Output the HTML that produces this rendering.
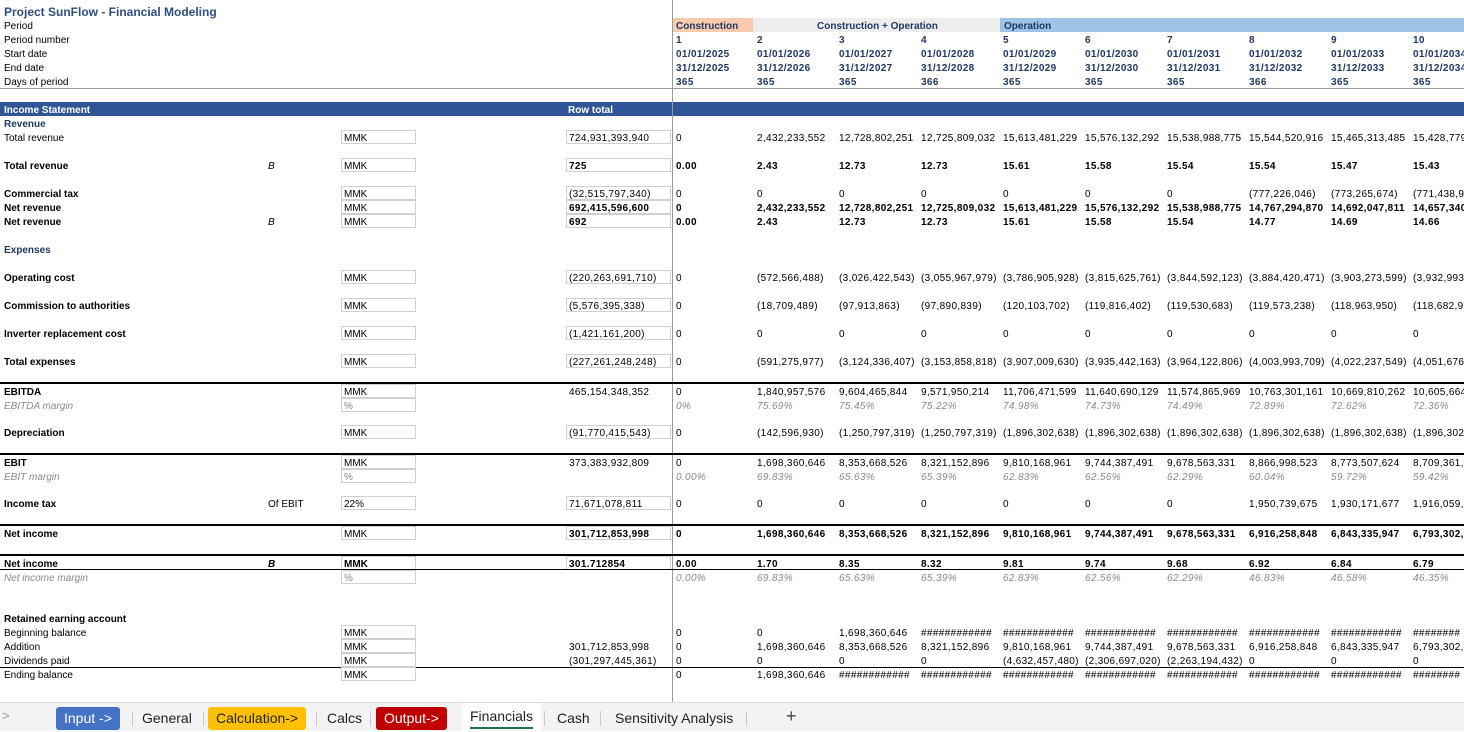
<!DOCTYPE html>
<html><head><meta charset="utf-8"><style>
*{margin:0;padding:0;box-sizing:border-box}
body{width:1464px;height:731px;overflow:hidden;background:#fff;font-family:"Liberation Sans",Arial,sans-serif;font-size:10px;color:#000;position:relative}
.r{position:absolute;left:0;width:1464px;height:14px;line-height:17px;white-space:nowrap}
.r span{position:absolute;top:0}
.a{left:4px}.b{left:268px}
.u{left:341px;width:75px;height:14px;border:1px solid #d0d0d0;padding-left:2px;line-height:15px}
.t{left:566px;width:105px;height:14px;border:1px solid #d0d0d0;padding-left:2px;line-height:15px;letter-spacing:0.35px}
.c0{left:676px}.c1{left:757px}.c2{left:839px}.c3{left:921px}.c4{left:1003px}.c5{left:1085px}.c6{left:1167px}.c7{left:1249px}.c8{left:1331px}.c9{left:1413px}
.r span[class^="c"]{letter-spacing:0.35px}
.bd{font-weight:bold}.bd span{font-weight:bold}
.it span{font-style:italic;color:#8a8a8a}
.it span.u{color:#8a8a8a;font-style:normal}
.nv span{color:#1f3864}
.hl{position:absolute;left:0;width:1464px;background:#000}
.vl{position:absolute;left:672px;top:0;width:1px;height:702px;background:#9a9a9a}
.tabs{position:absolute;left:0;top:702px;width:1464px;height:29px;background:#f3f3f3;border-top:1px solid #dcdcdc;font-size:14px}
.tab{position:absolute;top:4px;height:23px;line-height:23px;padding:0 8px;border-radius:3px;color:#222}
.sep{position:absolute;top:8px;width:1px;height:15px;background:#c8c8c8}
</style></head><body>
<div class="vl"></div>
<div style="position:absolute;left:673px;top:18px;width:80px;height:14px;background:#f8cbad"></div>
<div style="position:absolute;left:753px;top:18px;width:247px;height:14px;background:#ededed"></div>
<div style="position:absolute;left:1000px;top:18px;width:464px;height:14px;background:#9dc3e6"></div>
<div class="r" style="top:4px"><span class="a" style="font-weight:bold;font-size:12px;color:#2f4d7e">Project SunFlow - Financial Modeling</span></div>
<div class="r bd" style="top:18px"><span class="a" style="font-weight:normal">Period</span><span class="c0" style="color:#1f3864;letter-spacing:0">Construction</span><span style="left:817px;color:#1f3864">Construction + Operation</span><span style="left:1004px;color:#1f3864">Operation</span></div>
<div class="r" style="top:32px"><span class="a">Period number</span></div>
<div class="r bd nv" style="top:32px"><span class="c0">1</span><span class="c1">2</span><span class="c2">3</span><span class="c3">4</span><span class="c4">5</span><span class="c5">6</span><span class="c6">7</span><span class="c7">8</span><span class="c8">9</span><span class="c9">10</span></div>
<div class="r" style="top:46px"><span class="a">Start date</span></div>
<div class="r bd nv" style="top:46px"><span class="c0">01/01/2025</span><span class="c1">01/01/2026</span><span class="c2">01/01/2027</span><span class="c3">01/01/2028</span><span class="c4">01/01/2029</span><span class="c5">01/01/2030</span><span class="c6">01/01/2031</span><span class="c7">01/01/2032</span><span class="c8">01/01/2033</span><span class="c9">01/01/2034</span></div>
<div class="r" style="top:60px"><span class="a">End date</span></div>
<div class="r bd nv" style="top:60px"><span class="c0">31/12/2025</span><span class="c1">31/12/2026</span><span class="c2">31/12/2027</span><span class="c3">31/12/2028</span><span class="c4">31/12/2029</span><span class="c5">31/12/2030</span><span class="c6">31/12/2031</span><span class="c7">31/12/2032</span><span class="c8">31/12/2033</span><span class="c9">31/12/2034</span></div>
<div class="r" style="top:74px"><span class="a">Days of period</span></div>
<div class="r bd nv" style="top:74px"><span class="c0">365</span><span class="c1">365</span><span class="c2">365</span><span class="c3">366</span><span class="c4">365</span><span class="c5">365</span><span class="c6">365</span><span class="c7">366</span><span class="c8">365</span><span class="c9">365</span></div>
<div class="hl" style="top:88px;height:1px;background:#9a9a9a"></div>
<div style="position:absolute;left:0;top:102px;width:672px;height:14px;background:#2f5597"></div>
<div style="position:absolute;left:673px;top:102px;width:791px;height:14px;background:#2f5597"></div>
<div class="r bd" style="top:102px;color:#fff"><span class="a">Income Statement</span><span style="left:568px">Row total</span></div>
<div class="r bd" style="top:116px;color:#1f3864"><span class="a">Revenue</span></div>
<div class="r" style="top:130px"><span class="a">Total revenue</span><span class="u">MMK</span><span class="t">724,931,393,940</span><span class="c0">0</span><span class="c1">2,432,233,552</span><span class="c2">12,728,802,251</span><span class="c3">12,725,809,032</span><span class="c4">15,613,481,229</span><span class="c5">15,576,132,292</span><span class="c6">15,538,988,775</span><span class="c7">15,544,520,916</span><span class="c8">15,465,313,485</span><span class="c9">15,428,779</span></div>
<div class="r bd" style="top:158px"><span class="a">Total revenue</span><span class="b" style="font-weight:normal;font-style:italic">B</span><span class="u" style="font-weight:normal">MMK</span><span class="t">725</span><span class="c0">0.00</span><span class="c1">2.43</span><span class="c2">12.73</span><span class="c3">12.73</span><span class="c4">15.61</span><span class="c5">15.58</span><span class="c6">15.54</span><span class="c7">15.54</span><span class="c8">15.47</span><span class="c9">15.43</span></div>
<div class="r" style="top:186px"><span class="a bd" style="font-weight:bold">Commercial tax</span><span class="u">MMK</span><span class="t">(32,515,797,340)</span><span class="c0">0</span><span class="c1">0</span><span class="c2">0</span><span class="c3">0</span><span class="c4">0</span><span class="c5">0</span><span class="c6">0</span><span class="c7">(777,226,046)</span><span class="c8">(773,265,674)</span><span class="c9">(771,438,9</span></div>
<div class="r bd" style="top:200px"><span class="a">Net revenue</span><span class="u" style="font-weight:normal">MMK</span><span class="t">692,415,596,600</span><span class="c0">0</span><span class="c1">2,432,233,552</span><span class="c2">12,728,802,251</span><span class="c3">12,725,809,032</span><span class="c4">15,613,481,229</span><span class="c5">15,576,132,292</span><span class="c6">15,538,988,775</span><span class="c7">14,767,294,870</span><span class="c8">14,692,047,811</span><span class="c9">14,657,340</span></div>
<div class="r bd" style="top:214px"><span class="a">Net revenue</span><span class="b" style="font-weight:normal;font-style:italic">B</span><span class="u" style="font-weight:normal">MMK</span><span class="t">692</span><span class="c0">0.00</span><span class="c1">2.43</span><span class="c2">12.73</span><span class="c3">12.73</span><span class="c4">15.61</span><span class="c5">15.58</span><span class="c6">15.54</span><span class="c7">14.77</span><span class="c8">14.69</span><span class="c9">14.66</span></div>
<div class="r bd" style="top:242px;color:#1f3864"><span class="a">Expenses</span></div>
<div class="r" style="top:270px"><span class="a" style="font-weight:bold">Operating cost</span><span class="u">MMK</span><span class="t">(220,263,691,710)</span><span class="c0">0</span><span class="c1">(572,566,488)</span><span class="c2">(3,026,422,543)</span><span class="c3">(3,055,967,979)</span><span class="c4">(3,786,905,928)</span><span class="c5">(3,815,625,761)</span><span class="c6">(3,844,592,123)</span><span class="c7">(3,884,420,471)</span><span class="c8">(3,903,273,599)</span><span class="c9">(3,932,993</span></div>
<div class="r" style="top:298px"><span class="a" style="font-weight:bold">Commission to authorities</span><span class="u">MMK</span><span class="t">(5,576,395,338)</span><span class="c0">0</span><span class="c1">(18,709,489)</span><span class="c2">(97,913,863)</span><span class="c3">(97,890,839)</span><span class="c4">(120,103,702)</span><span class="c5">(119,816,402)</span><span class="c6">(119,530,683)</span><span class="c7">(119,573,238)</span><span class="c8">(118,963,950)</span><span class="c9">(118,682,9</span></div>
<div class="r" style="top:326px"><span class="a" style="font-weight:bold">Inverter replacement cost</span><span class="u">MMK</span><span class="t">(1,421,161,200)</span><span class="c0">0</span><span class="c1">0</span><span class="c2">0</span><span class="c3">0</span><span class="c4">0</span><span class="c5">0</span><span class="c6">0</span><span class="c7">0</span><span class="c8">0</span><span class="c9">0</span></div>
<div class="r" style="top:354px"><span class="a" style="font-weight:bold">Total expenses</span><span class="u">MMK</span><span class="t">(227,261,248,248)</span><span class="c0">0</span><span class="c1">(591,275,977)</span><span class="c2">(3,124,336,407)</span><span class="c3">(3,153,858,818)</span><span class="c4">(3,907,009,630)</span><span class="c5">(3,935,442,163)</span><span class="c6">(3,964,122,806)</span><span class="c7">(4,003,993,709)</span><span class="c8">(4,022,237,549)</span><span class="c9">(4,051,676</span></div>
<div class="hl" style="top:382px;height:2px"></div>
<div class="r" style="top:384px"><span class="a" style="font-weight:bold">EBITDA</span><span class="u">MMK</span><span class="t" style="border-color:transparent">465,154,348,352</span><span class="c0">0</span><span class="c1">1,840,957,576</span><span class="c2">9,604,465,844</span><span class="c3">9,571,950,214</span><span class="c4">11,706,471,599</span><span class="c5">11,640,690,129</span><span class="c6">11,574,865,969</span><span class="c7">10,763,301,161</span><span class="c8">10,669,810,262</span><span class="c9">10,605,664</span></div>
<div class="r it" style="top:398px"><span class="a">EBITDA margin</span><span class="u">%</span><span class="c0">0%</span><span class="c1">75.69%</span><span class="c2">75.45%</span><span class="c3">75.22%</span><span class="c4">74.98%</span><span class="c5">74.73%</span><span class="c6">74.49%</span><span class="c7">72.89%</span><span class="c8">72.62%</span><span class="c9">72.36%</span></div>
<div class="r" style="top:425px"><span class="a" style="font-weight:bold">Depreciation</span><span class="u">MMK</span><span class="t">(91,770,415,543)</span><span class="c0">0</span><span class="c1">(142,596,930)</span><span class="c2">(1,250,797,319)</span><span class="c3">(1,250,797,319)</span><span class="c4">(1,896,302,638)</span><span class="c5">(1,896,302,638)</span><span class="c6">(1,896,302,638)</span><span class="c7">(1,896,302,638)</span><span class="c8">(1,896,302,638)</span><span class="c9">(1,896,302</span></div>
<div class="hl" style="top:453px;height:2px"></div>
<div class="r" style="top:455px"><span class="a" style="font-weight:bold">EBIT</span><span class="u">MMK</span><span class="t" style="border-color:transparent">373,383,932,809</span><span class="c0">0</span><span class="c1">1,698,360,646</span><span class="c2">8,353,668,526</span><span class="c3">8,321,152,896</span><span class="c4">9,810,168,961</span><span class="c5">9,744,387,491</span><span class="c6">9,678,563,331</span><span class="c7">8,866,998,523</span><span class="c8">8,773,507,624</span><span class="c9">8,709,361,</span></div>
<div class="r it" style="top:469px"><span class="a">EBIT margin</span><span class="u">%</span><span class="c0">0.00%</span><span class="c1">69.83%</span><span class="c2">65.63%</span><span class="c3">65.39%</span><span class="c4">62.83%</span><span class="c5">62.56%</span><span class="c6">62.29%</span><span class="c7">60.04%</span><span class="c8">59.72%</span><span class="c9">59.42%</span></div>
<div class="r" style="top:496px"><span class="a" style="font-weight:bold">Income tax</span><span class="b">Of EBIT</span><span class="u">22%</span><span class="t">71,671,078,811</span><span class="c0">0</span><span class="c1">0</span><span class="c2">0</span><span class="c3">0</span><span class="c4">0</span><span class="c5">0</span><span class="c6">0</span><span class="c7">1,950,739,675</span><span class="c8">1,930,171,677</span><span class="c9">1,916,059,</span></div>
<div class="hl" style="top:524px;height:2px"></div>
<div class="r bd" style="top:526px"><span class="a">Net income</span><span class="u" style="font-weight:normal">MMK</span><span class="t">301,712,853,998</span><span class="c0">0</span><span class="c1">1,698,360,646</span><span class="c2">8,353,668,526</span><span class="c3">8,321,152,896</span><span class="c4">9,810,168,961</span><span class="c5">9,744,387,491</span><span class="c6">9,678,563,331</span><span class="c7">6,916,258,848</span><span class="c8">6,843,335,947</span><span class="c9">6,793,302,</span></div>
<div class="hl" style="top:554px;height:2px"></div>
<div class="r bd" style="top:556px"><span class="a">Net income</span><span class="b" style="font-style:italic">B</span><span class="u">MMK</span><span class="t">301.712854</span><span class="c0">0.00</span><span class="c1">1.70</span><span class="c2">8.35</span><span class="c3">8.32</span><span class="c4">9.81</span><span class="c5">9.74</span><span class="c6">9.68</span><span class="c7">6.92</span><span class="c8">6.84</span><span class="c9">6.79</span></div>
<div class="hl" style="top:569px;height:1px"></div>
<div class="r it" style="top:570px"><span class="a">Net income margin</span><span class="u">%</span><span class="c0">0.00%</span><span class="c1">69.83%</span><span class="c2">65.63%</span><span class="c3">65.39%</span><span class="c4">62.83%</span><span class="c5">62.56%</span><span class="c6">62.29%</span><span class="c7">46.83%</span><span class="c8">46.58%</span><span class="c9">46.35%</span></div>
<div class="r bd" style="top:611px"><span class="a">Retained earning account</span></div>
<div class="r" style="top:625px"><span class="a">Beginning balance</span><span class="u">MMK</span><span class="c0">0</span><span class="c1">0</span><span class="c2">1,698,360,646</span><span class="c3">############</span><span class="c4">############</span><span class="c5">############</span><span class="c6">############</span><span class="c7">############</span><span class="c8">############</span><span class="c9">########</span></div>
<div class="r" style="top:639px"><span class="a">Addition</span><span class="u">MMK</span><span class="t" style="border-color:transparent">301,712,853,998</span><span class="c0">0</span><span class="c1">1,698,360,646</span><span class="c2">8,353,668,526</span><span class="c3">8,321,152,896</span><span class="c4">9,810,168,961</span><span class="c5">9,744,387,491</span><span class="c6">9,678,563,331</span><span class="c7">6,916,258,848</span><span class="c8">6,843,335,947</span><span class="c9">6,793,302,</span></div>
<div class="r" style="top:653px"><span class="a">Dividends paid</span><span class="u">MMK</span><span class="t" style="border-color:transparent">(301,297,445,361)</span><span class="c0">0</span><span class="c1">0</span><span class="c2">0</span><span class="c3">0</span><span class="c4">(4,632,457,480)</span><span class="c5">(2,306,697,020)</span><span class="c6">(2,263,194,432)</span><span class="c7">0</span><span class="c8">0</span><span class="c9">0</span></div>
<div class="hl" style="top:667px;height:1px"></div>
<div class="r" style="top:667px"><span class="a">Ending balance</span><span class="u">MMK</span><span class="c0">0</span><span class="c1">1,698,360,646</span><span class="c2">############</span><span class="c3">############</span><span class="c4">############</span><span class="c5">############</span><span class="c6">############</span><span class="c7">############</span><span class="c8">############</span><span class="c9">########</span></div>
<div class="tabs">
<span style="position:absolute;left:2px;top:5px;color:#999;font-size:13px">&gt;</span>
<span class="tab" style="left:56px;background:#4472c4;color:#fff">Input -&gt;</span>
<span class="sep" style="left:132px"></span>
<span class="tab" style="left:134px">General</span>
<span class="sep" style="left:203px"></span>
<span class="tab" style="left:208px;background:#ffc000">Calculation-&gt;</span>
<span class="sep" style="left:316px"></span>
<span class="tab" style="left:319px">Calcs</span>
<span class="sep" style="left:370px"></span>
<span class="tab" style="left:376px;background:#c00000;color:#fff">Output-&gt;</span>
<span class="tab" style="left:462px;top:0;height:29px;line-height:26px;background:#fff;border-radius:0;font-weight:500">Financials<span style="position:absolute;left:8px;right:8px;top:24px;height:2px;background:#217346"></span></span>
<span class="sep" style="left:544px"></span>
<span class="tab" style="left:549px">Cash</span>
<span class="sep" style="left:600px"></span>
<span class="tab" style="left:607px">Sensitivity Analysis</span>
<span class="sep" style="left:746px"></span>
<span style="position:absolute;left:786px;top:3px;font-size:18px;color:#444">+</span>
</div>
</body></html>
